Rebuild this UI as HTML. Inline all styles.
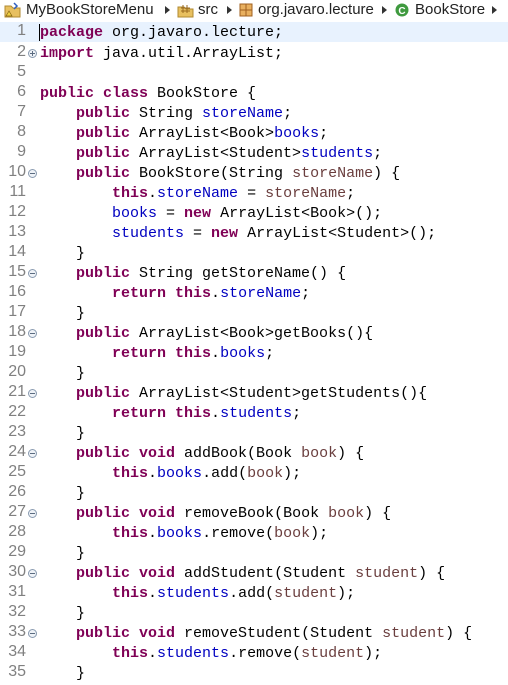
<!DOCTYPE html>
<html><head><meta charset="utf-8"><style>
html,body{margin:0;padding:0;background:#fff;width:508px;height:685px;overflow:hidden}
.bc{position:absolute;left:0;top:0;height:22px;width:508px;font:15px "Liberation Sans",sans-serif;color:#222;white-space:nowrap}
.bc span{position:absolute;top:1px}
.tri{position:absolute;top:6px;width:0;height:0;border-left:5px solid #333;border-top:4px solid transparent;border-bottom:4px solid transparent}
.row{position:absolute;left:0;height:20px;width:508px}
.ln{position:absolute;right:482px;top:0px;font:16px "Liberation Sans",sans-serif;color:#808080;text-align:right}
.code{position:absolute;left:40px;top:2px;font:15px/18px "Liberation Mono",monospace;white-space:pre;color:#000}
.k{color:#7f0055;font-weight:bold}
.f{color:#0000c0}
.p{color:#6a3e3e}
.fold{position:absolute;left:28px;top:6px;width:7px;height:7px;border:1px solid #8a9bb0;border-radius:50%;background:#eef2f7}
.fold:after{content:"";position:absolute;left:1px;top:3px;width:5px;height:1px;background:#5a6b80}
.fold.plus:before{content:"";position:absolute;left:3px;top:1px;width:1px;height:5px;background:#5a6b80}
</style></head><body>
<div class="bc">
<svg style="position:absolute;left:4px;top:2px" width="18" height="16"><path d="M1 4h6l2 2h7v9H1z" fill="#e8c060" stroke="#b08a30"/><path d="M10 1l3 3-3 3" stroke="#3060c0" fill="none" stroke-width="1.5"/><path d="M2 14l3-5 3 5z" fill="#f0d040" stroke="#806010" stroke-width=".7"/></svg>
<span style="left:26px">MyBookStoreMenu</span><div class="tri" style="left:165px"></div>
<svg style="position:absolute;left:177px;top:2px" width="18" height="16"><path d="M1 5h6l2 2h7v8H1z" fill="#e8c060" stroke="#b08a30"/><path d="M6 3v8M10 3v8M4 6h9M4 9h9" stroke="#9a6a20" stroke-width="1"/></svg>
<span style="left:198px">src</span><div class="tri" style="left:227px"></div>
<svg style="position:absolute;left:239px;top:3px" width="14" height="14"><rect x="1" y="1" width="12" height="12" fill="#e8b060" stroke="#a06020"/><path d="M7 1v12M1 7h12" stroke="#a06020"/></svg>
<span style="left:258px">org.javaro.lecture</span><div class="tri" style="left:382px"></div>
<svg style="position:absolute;left:395px;top:3px" width="14" height="14"><circle cx="7" cy="7" r="6.5" fill="#3f9a3f"/><text x="7" y="11" font-size="10" font-weight="bold" fill="#fff" text-anchor="middle" font-family="Liberation Sans">C</text></svg>
<span style="left:415px">BookStore</span><div class="tri" style="left:492px"></div>
</div>
<div class="row" style="top:22px;background:#e8f2fe"><div class="ln">1</div><div class="code"><span class="k">package</span> org.javaro.lecture;</div><div style="position:absolute;left:39px;top:2px;width:1px;height:17px;background:#000"></div></div>
<div class="row" style="top:43px"><div class="ln">2</div><div class="fold plus"></div><div class="code"><span class="k">import</span> java.util.ArrayList;</div></div>
<div class="row" style="top:63px"><div class="ln">5</div></div>
<div class="row" style="top:83px"><div class="ln">6</div><div class="code"><span class="k">public class</span> BookStore {</div></div>
<div class="row" style="top:103px"><div class="ln">7</div><div class="code">    <span class="k">public</span> String <span class="f">storeName</span>;</div></div>
<div class="row" style="top:123px"><div class="ln">8</div><div class="code">    <span class="k">public</span> ArrayList&lt;Book&gt;<span class="f">books</span>;</div></div>
<div class="row" style="top:143px"><div class="ln">9</div><div class="code">    <span class="k">public</span> ArrayList&lt;Student&gt;<span class="f">students</span>;</div></div>
<div class="row" style="top:163px"><div class="ln">10</div><div class="fold"></div><div class="code">    <span class="k">public</span> BookStore(String <span class="p">storeName</span>) {</div></div>
<div class="row" style="top:183px"><div class="ln">11</div><div class="code">        <span class="k">this</span>.<span class="f">storeName</span> = <span class="p">storeName</span>;</div></div>
<div class="row" style="top:203px"><div class="ln">12</div><div class="code">        <span class="f">books</span> = <span class="k">new</span> ArrayList&lt;Book&gt;();</div></div>
<div class="row" style="top:223px"><div class="ln">13</div><div class="code">        <span class="f">students</span> = <span class="k">new</span> ArrayList&lt;Student&gt;();</div></div>
<div class="row" style="top:243px"><div class="ln">14</div><div class="code">    }</div></div>
<div class="row" style="top:263px"><div class="ln">15</div><div class="fold"></div><div class="code">    <span class="k">public</span> String getStoreName() {</div></div>
<div class="row" style="top:283px"><div class="ln">16</div><div class="code">        <span class="k">return this</span>.<span class="f">storeName</span>;</div></div>
<div class="row" style="top:303px"><div class="ln">17</div><div class="code">    }</div></div>
<div class="row" style="top:323px"><div class="ln">18</div><div class="fold"></div><div class="code">    <span class="k">public</span> ArrayList&lt;Book&gt;getBooks(){</div></div>
<div class="row" style="top:343px"><div class="ln">19</div><div class="code">        <span class="k">return this</span>.<span class="f">books</span>;</div></div>
<div class="row" style="top:363px"><div class="ln">20</div><div class="code">    }</div></div>
<div class="row" style="top:383px"><div class="ln">21</div><div class="fold"></div><div class="code">    <span class="k">public</span> ArrayList&lt;Student&gt;getStudents(){</div></div>
<div class="row" style="top:403px"><div class="ln">22</div><div class="code">        <span class="k">return this</span>.<span class="f">students</span>;</div></div>
<div class="row" style="top:423px"><div class="ln">23</div><div class="code">    }</div></div>
<div class="row" style="top:443px"><div class="ln">24</div><div class="fold"></div><div class="code">    <span class="k">public void</span> addBook(Book <span class="p">book</span>) {</div></div>
<div class="row" style="top:463px"><div class="ln">25</div><div class="code">        <span class="k">this</span>.<span class="f">books</span>.add(<span class="p">book</span>);</div></div>
<div class="row" style="top:483px"><div class="ln">26</div><div class="code">    }</div></div>
<div class="row" style="top:503px"><div class="ln">27</div><div class="fold"></div><div class="code">    <span class="k">public void</span> removeBook(Book <span class="p">book</span>) {</div></div>
<div class="row" style="top:523px"><div class="ln">28</div><div class="code">        <span class="k">this</span>.<span class="f">books</span>.remove(<span class="p">book</span>);</div></div>
<div class="row" style="top:543px"><div class="ln">29</div><div class="code">    }</div></div>
<div class="row" style="top:563px"><div class="ln">30</div><div class="fold"></div><div class="code">    <span class="k">public void</span> addStudent(Student <span class="p">student</span>) {</div></div>
<div class="row" style="top:583px"><div class="ln">31</div><div class="code">        <span class="k">this</span>.<span class="f">students</span>.add(<span class="p">student</span>);</div></div>
<div class="row" style="top:603px"><div class="ln">32</div><div class="code">    }</div></div>
<div class="row" style="top:623px"><div class="ln">33</div><div class="fold"></div><div class="code">    <span class="k">public void</span> removeStudent(Student <span class="p">student</span>) {</div></div>
<div class="row" style="top:643px"><div class="ln">34</div><div class="code">        <span class="k">this</span>.<span class="f">students</span>.remove(<span class="p">student</span>);</div></div>
<div class="row" style="top:663px"><div class="ln">35</div><div class="code">    }</div></div>
</body></html>
